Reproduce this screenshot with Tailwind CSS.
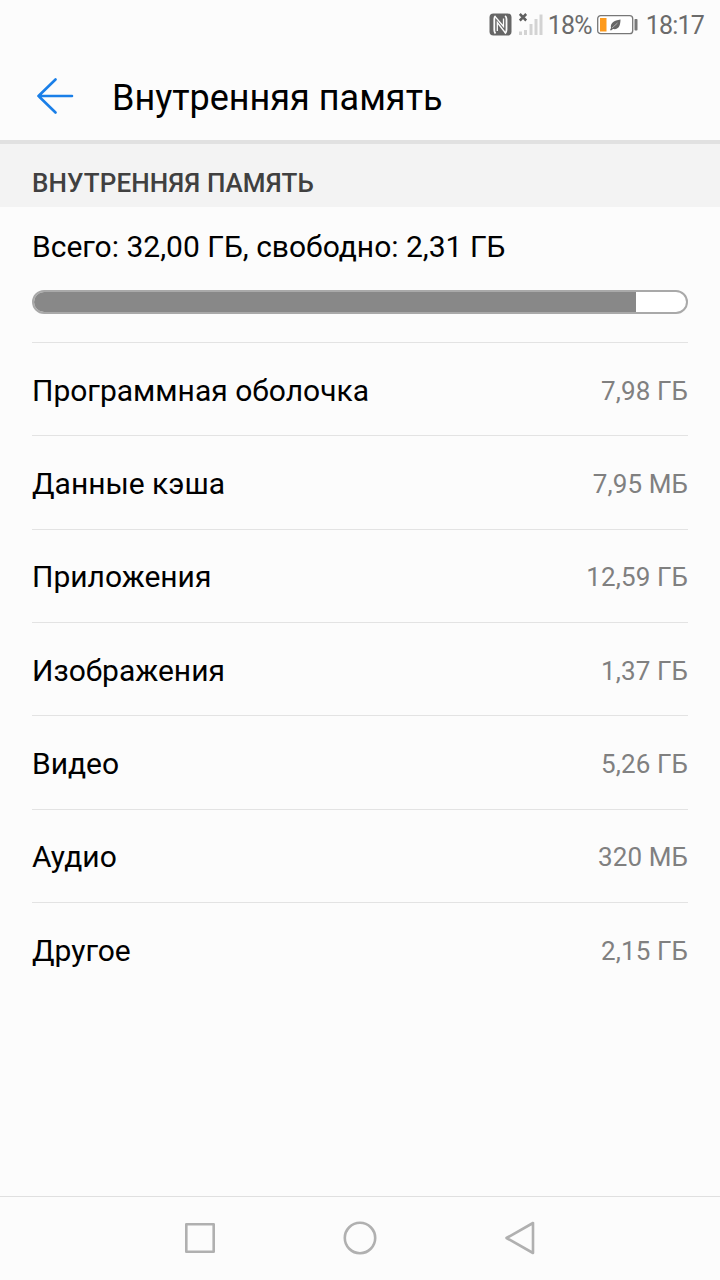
<!DOCTYPE html>
<html lang="ru">
<head>
    <meta charset="UTF-8">
    <meta name="viewport" content="width=device-width, initial-scale=1.0">
    <title>Внутренняя память</title>
    <script src="https://cdn.jsdelivr.net/npm/@tailwindcss/browser@4"></script>
</head>
<body class="bg-[#fcfcfc]">
    <div class="w-[720px] h-[1280px] flex flex-col overflow-hidden bg-[#fcfcfc] text-black font-['Roboto',sans-serif]">
        <!-- Status bar -->
        <div class="h-12 flex items-center justify-end pr-4 pt-px text-[25px] leading-none tracking-[-0.8px] text-[#6b6b6b]">
            <svg class="w-[23px] h-6 mr-[7px]" viewBox="0 0 23 24" fill="none">
                <rect x="0.5" y="0.5" width="22" height="22" rx="4" fill="#666"/>
                <path d="M6.500 20.500C5.500 19.500 5.300 18.500 5.300 17V6C5.300 4.500 5.500 3.500 6.500 3" stroke="#fcfcfc" stroke-width="1.800"/>
                <path d="M16 20.500C17 19.500 17.500 18.500 17.500 17V6C17.500 4.500 17 3.500 16 3" stroke="#fcfcfc" stroke-width="1.800"/>
                <path d="M6 3.500L14.500 13.500V5.500" stroke="#fcfcfc" stroke-width="1.300"/>
                <path d="M8.300 18V9.500L16.500 20" stroke="#fcfcfc" stroke-width="1.300"/>
            </svg>
            <svg class="w-6 h-6 mr-[5px]" viewBox="0 0 24 24" fill="none">
                <path d="M1.500 18.500V22M6.500 17V22M12 11V22M17 6V22M22 1.500V22" stroke="#d3d3d3" stroke-width="3"/>
                <path d="M0.800 1L7.200 7.500M7.200 1L0.800 7.500" stroke="#5f5f5f" stroke-width="2.500"/>
            </svg>
            <span class="pt-0.5">18%</span>
            <svg class="w-[41px] h-5 ml-[5px] mr-2" viewBox="0 0 41 20" fill="none">
                <rect x="0.700" y="0.700" width="35" height="18" rx="3" fill="#fff" stroke="#777" stroke-width="1.300"/>
                <rect x="3" y="3" width="6.500" height="13.500" fill="#fd9a1c"/>
                <path d="M13 15L14 13C13 8 17 5.500 23.500 4.500C23.500 10 22 15 16 14L14 15.500Z" fill="#666"/>
                <path d="M15 13L20.500 8" stroke="#ddd" stroke-width="0.600"/>
                <rect x="37.500" y="4" width="3" height="11.500" rx="0.800" fill="#777"/>
            </svg>
            <span class="pt-0.5">18:17</span>
        </div>

        <!-- Header -->
        <header class="h-24 flex items-center pl-9 border-b-4 border-[#e1e1e1]">
            <svg class="w-[38px] h-[38px] mr-[38px] mt-0.5" viewBox="0 0 38 38" fill="none" stroke="#1a7fe8" stroke-width="2.600" stroke-linecap="round" stroke-linejoin="round">
                <path d="M36 20H2.500M19.500 3.500L2.500 20L19.500 36.500"/>
            </svg>
            <h1 class="text-[36px] leading-none pt-2">Внутренняя память</h1>
        </header>

        <main class="flex-1">
            <h2 class="h-[63px] flex items-end px-8 pb-[11px] bg-[#f3f3f3] text-[26px] leading-[26px] tracking-[0.1px] font-medium text-[#404040]">ВНУТРЕННЯЯ ПАМЯТЬ</h2>

            <section class="px-8">
                <p class="pt-[22px] text-[30px] leading-9">Всего: 32,00 ГБ, свободно: 2,31 ГБ</p>
                <div class="mt-[25px] h-6 rounded-full border-2 border-[#a9a9a9] bg-white overflow-hidden">
                    <div class="h-full bg-[#888]" style="width: 92.3%"></div>
                </div>

                <ul class="mt-7 border-t border-[#e3e3e3] divide-y divide-[#e3e3e3]">
                    <li class="h-[93.33px] pt-0.5 flex items-center justify-between">
                        <span class="text-[30px]">Программная оболочка</span>
                        <span class="pt-0.5 text-[26px] tracking-[0.1px] text-[#808080]">7,98 ГБ</span>
                    </li>
                    <li class="h-[93.33px] pt-0.5 flex items-center justify-between">
                        <span class="text-[30px]">Данные кэша</span>
                        <span class="pt-0.5 text-[26px] tracking-[0.1px] text-[#808080]">7,95 МБ</span>
                    </li>
                    <li class="h-[93.33px] pt-0.5 flex items-center justify-between">
                        <span class="text-[30px]">Приложения</span>
                        <span class="pt-0.5 text-[26px] tracking-[0.1px] text-[#808080]">12,59 ГБ</span>
                    </li>
                    <li class="h-[93.33px] pt-0.5 flex items-center justify-between">
                        <span class="text-[30px]">Изображения</span>
                        <span class="pt-0.5 text-[26px] tracking-[0.1px] text-[#808080]">1,37 ГБ</span>
                    </li>
                    <li class="h-[93.33px] pt-0.5 flex items-center justify-between">
                        <span class="text-[30px]">Видео</span>
                        <span class="pt-0.5 text-[26px] tracking-[0.1px] text-[#808080]">5,26 ГБ</span>
                    </li>
                    <li class="h-[93.33px] pt-0.5 flex items-center justify-between">
                        <span class="text-[30px]">Аудио</span>
                        <span class="pt-0.5 text-[26px] tracking-[0.1px] text-[#808080]">320 МБ</span>
                    </li>
                    <li class="h-[93.33px] pt-0.5 flex items-center justify-between">
                        <span class="text-[30px]">Другое</span>
                        <span class="pt-0.5 text-[26px] tracking-[0.1px] text-[#808080]">2,15 ГБ</span>
                    </li>
                </ul>
            </section>
        </main>

        <!-- Navigation bar -->
        <nav class="h-[84px] flex items-center justify-center gap-[124px] border-t border-[#e0e0e0]">
            <svg class="w-9 h-9" viewBox="0 0 36 36" fill="none" stroke="#b0b0b0" stroke-width="2.600" stroke-linejoin="round">
                <rect x="4.300" y="3.300" width="27.400" height="27.400"/>
            </svg>
            <svg class="w-9 h-9" viewBox="0 0 36 36" fill="none" stroke="#b0b0b0" stroke-width="2.600">
                <circle cx="18" cy="17" r="15.200"/>
            </svg>
            <svg class="w-9 h-9" viewBox="0 0 36 36" fill="none" stroke="#b0b0b0" stroke-width="2.600" stroke-linejoin="round">
                <path d="M31 2V32L4.500 17Z"/>
            </svg>
        </nav>
    </div>
</body>
</html>
